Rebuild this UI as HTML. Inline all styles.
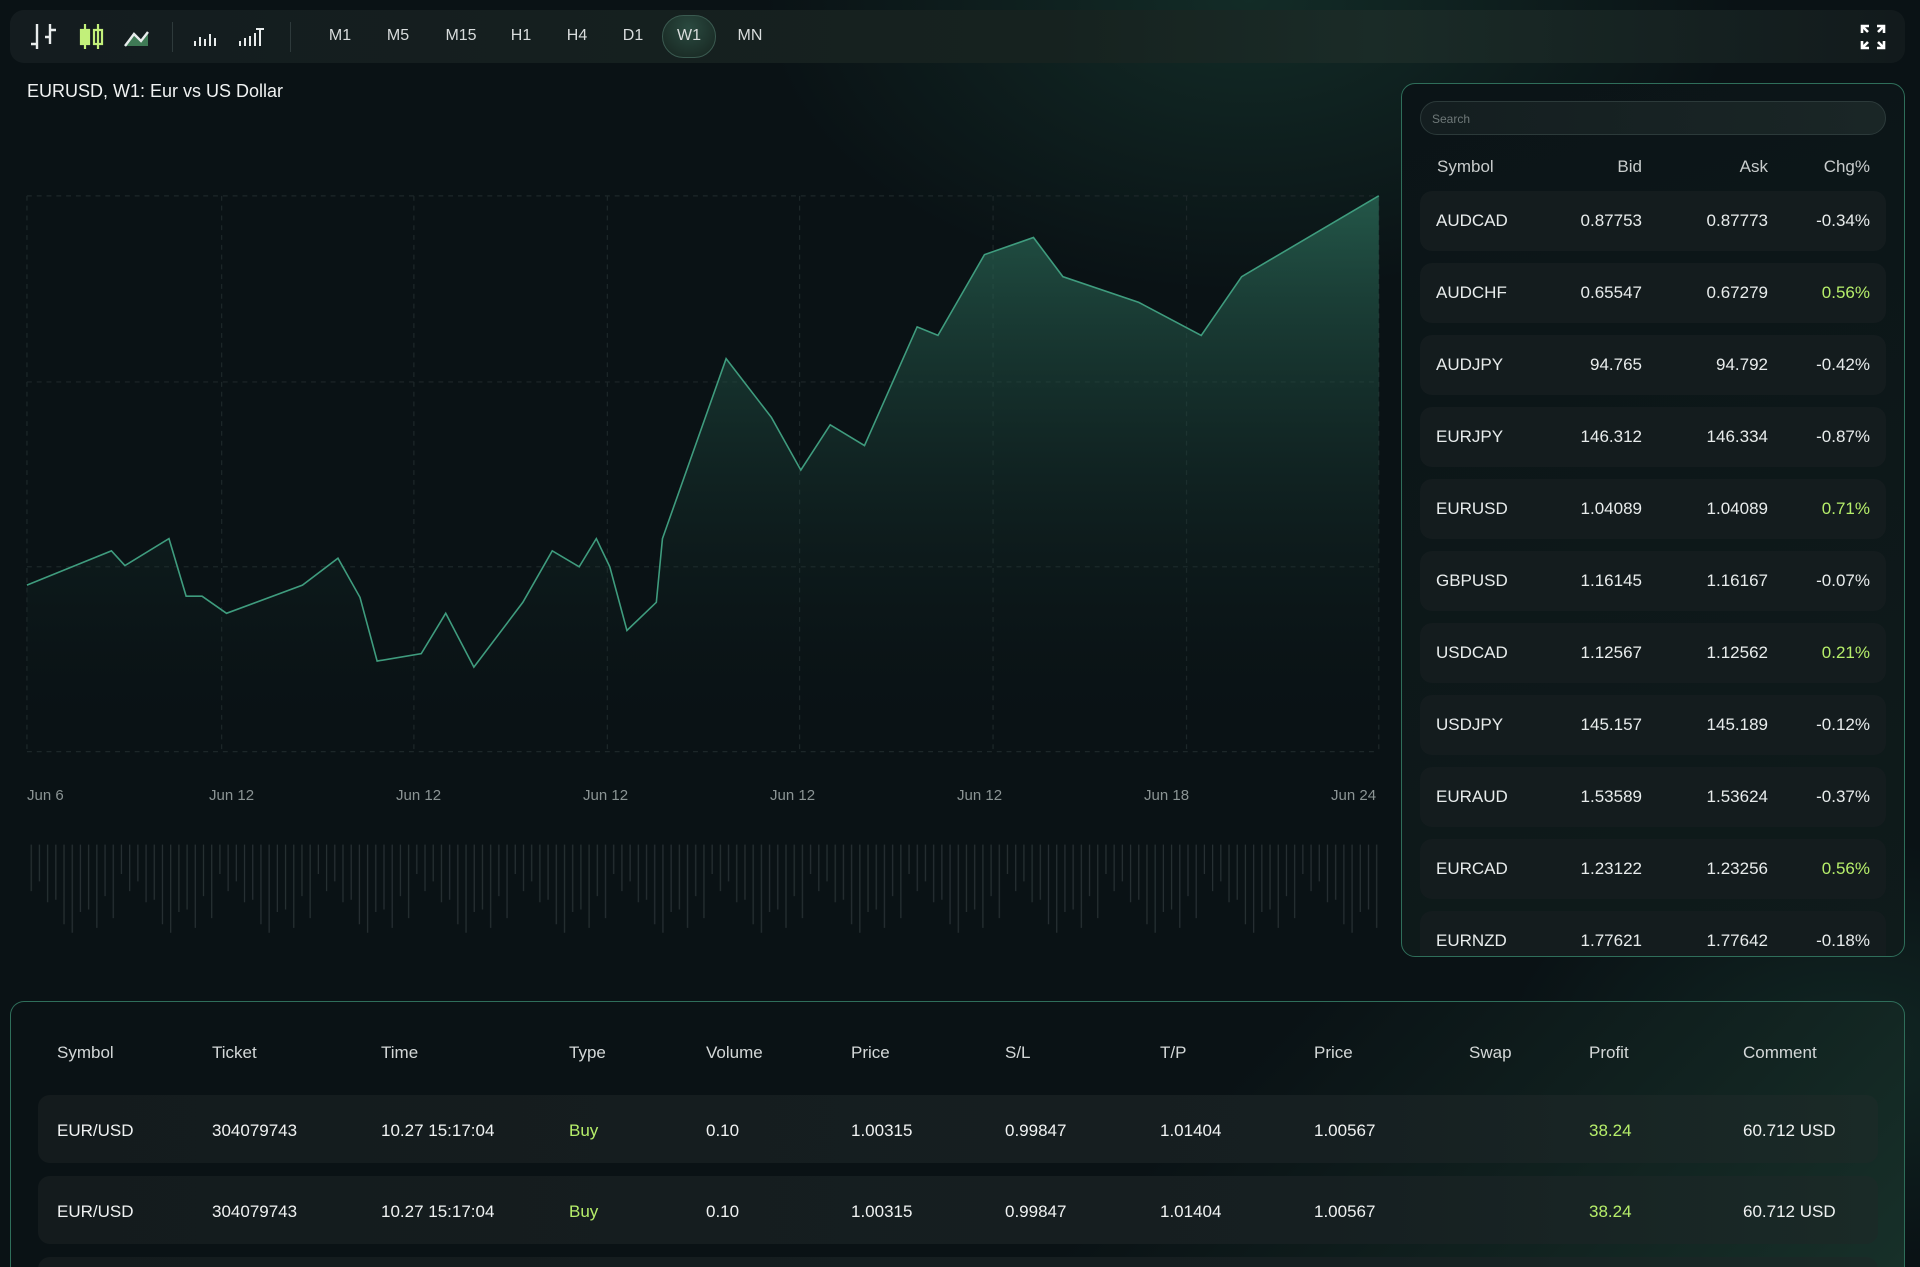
<!DOCTYPE html>
<html style="width:1920px;height:1267px;overflow:hidden"><head><meta charset="utf-8"><style>
*{margin:0;padding:0;box-sizing:border-box}
body{width:1920px;height:1267px;overflow:hidden;background:#0a1215;font-family:"Liberation Sans",sans-serif;color:#e8ecec;position:relative}
.glow{position:absolute;inset:0;background:radial-gradient(ellipse 700px 420px at 1250px 0px,rgba(40,110,85,.28),transparent 70%),radial-gradient(ellipse 500px 300px at 1850px 1050px,rgba(40,110,85,.22),transparent 70%)}
.tb{position:absolute;left:10px;top:10px;width:1895px;height:53px;border-radius:14px;background:linear-gradient(90deg,#141c1f 0%,#16221f 55%,#1a2b27 72%,#121a1c 100%)}
.tf{position:absolute;top:27px;font-size:16px;color:#d8dcdc;transform:translateX(-50%)}
.sep{position:absolute;top:22px;width:1px;height:30px;background:#2e3a3b}
.pill{position:absolute;left:662px;top:15px;width:54px;height:43px;border-radius:22px;border:1px solid #3a5a50;background:radial-gradient(circle at 50% 30%,#2a4a40,#16241f)}
.title{position:absolute;left:27px;top:81px;font-size:18px;color:#f0f2f2}
.xl{position:absolute;top:787px;font-size:15px;color:#8b9494}
.panel{position:absolute;left:1401px;top:83px;width:504px;height:874px;border:1px solid #2f6e5a;border-radius:14px;overflow:hidden;background:linear-gradient(160deg,#0b1417,#0f1b1b)}
.search{position:absolute;left:18px;top:17px;width:466px;height:34px;border:1px solid #2c3a3a;border-radius:17px;background:linear-gradient(90deg,#141e20,#1a2626);font-size:12px;color:#6e7878;padding:10px 11px}
.ph{position:absolute;top:73px;font-size:17px;color:#c8cccc}
.row{position:absolute;left:18px;width:466px;height:60px;border-radius:12px;background:#141c1e;font-size:17px}
.row span{position:absolute;top:20px}
.g{color:#b6ee6a}
.bp{position:absolute;left:10px;top:1001px;width:1895px;height:266px;border:1px solid #2f6e5a;border-bottom:none;border-radius:14px 14px 0 0;background:linear-gradient(135deg,#0a1215 60%,#173029 100%);overflow:hidden}
.bh{position:absolute;top:1043px;font-size:17px;color:#d4d8d8}
.br{position:absolute;left:27px;width:1840px;height:68px;border-radius:12px;background:linear-gradient(90deg,#141b1d,#161f21 70%,#1a2a27)}
.bc{position:absolute;font-size:17px;color:#f0f2f2}
.bc.g{color:#b6ee6a}
</style></head><body>
<div class="glow"></div>
<div class="tb"></div>
<svg style="position:absolute;left:0;top:0" width="280" height="70">
<g stroke="#e8ecec" stroke-width="2.4" fill="none">
<path d="M37 24v25M31 44h6M50 24v20M50 30h6M45 37h5"/>
</g>
<g stroke="#c2f07a" stroke-width="2.2" fill="none"><path d="M85 24v25M98 24v25"/><rect x="81" y="30" width="8" height="14" fill="#c2f07a"/><rect x="94" y="30" width="8" height="14"/></g>
<path d="M125 46l9-12 7 7 7-9v14H125z" fill="#3f7a55"/><path d="M125 46l9-12 7 7 7-9" stroke="#e8ecec" stroke-width="2.4" fill="none"/>
<g stroke="#e8ecec" stroke-width="2"><path d="M195 46v-5M200 46v-9M205 46v-7M210 46v-12M215 46v-8"/><path d="M240 46v-5M245 46v-8M250 46v-10M255 46v-13M260 46v-17M256 29h8"/></g>
</svg>
<div class="sep" style="left:172px"></div><div class="sep" style="left:290px"></div>
<div class="pill"></div>
<div class="tf" style="left:340px">M1</div><div class="tf" style="left:398px">M5</div><div class="tf" style="left:461px">M15</div><div class="tf" style="left:521px">H1</div><div class="tf" style="left:577px">H4</div><div class="tf" style="left:633px">D1</div><div class="tf" style="left:689px">W1</div><div class="tf" style="left:750px">MN</div>
<svg style="position:absolute;left:1860px;top:24px" width="26" height="26" stroke="#fff" stroke-width="2.6" fill="none"><path d="M2 9V2h7M2 2l6 6M24 9V2h-7M24 2l-6 6M2 17v7h7M2 24l6-6M24 17v7h-7M24 24l-6-6"/></svg>
<div class="title">EURUSD, W1: Eur vs US Dollar</div>
<svg style="position:absolute;left:0;top:0" width="1920" height="1267" viewBox="0 0 1568 1035" preserveAspectRatio="none">
<defs>
<linearGradient id="f" x1="0" y1="0" x2="0" y2="1"><stop offset="0" stop-color="#2b6b58" stop-opacity=".75"/><stop offset="1" stop-color="#0a1215" stop-opacity="0"/></linearGradient>
<pattern id="v" x="25" y="0" width="80.4" height="1035" patternUnits="userSpaceOnUse">
<g stroke="#273033" stroke-width="1">
<path d="M0.5 690v38M7.2 690v30M13.9 690v47M20.6 690v45M27.3 690v65M34 690v72M40.7 690v55M47.4 690v53M54.1 690v68M60.8 690v42M67.5 690v60M74.2 690v24"/>
</g></pattern>
</defs>
<g stroke="#1d2729" stroke-width="1" stroke-dasharray="4 4" fill="none">
<path d="M22 160H1126M22 312H1126M22 463H1126M22 614H1126"/>
<path d="M22 160V614M181 160V614M338 160V614M496 160V614M653 160V614M811 160V614M969 160V614M1126 160V614"/>
</g>
<path d="M22 478L91 450L102 462L138 440L152 487L165 487L185 501L247 478L276 456L294 488L308 540L344 534L364 501L387 545L427 492L451 450L473 463L487 440L498 463L512 515L536 492L541 440L593 293L630 341L654 384L678 347L706 364L749 267L766 274L804 208L844 194L868 226L930 247L981 274L1014 226L1126 160V614H22Z" fill="url(#f)"/>
<path d="M22 478L91 450L102 462L138 440L152 487L165 487L185 501L247 478L276 456L294 488L308 540L344 534L364 501L387 545L427 492L451 450L473 463L487 440L498 463L512 515L536 492L541 440L593 293L630 341L654 384L678 347L706 364L749 267L766 274L804 208L844 194L868 226L930 247L981 274L1014 226L1126 160" fill="none" stroke="#3f9c7e" stroke-width="1.3"/>
<rect x="22" y="688" width="1105" height="90" fill="url(#v)"/>
</svg>
<div class="xl" style="left:27px">Jun 6</div><div class="xl" style="left:209px">Jun 12</div><div class="xl" style="left:396px">Jun 12</div><div class="xl" style="left:583px">Jun 12</div><div class="xl" style="left:770px">Jun 12</div><div class="xl" style="left:957px">Jun 12</div><div class="xl" style="left:1144px">Jun 18</div><div class="xl" style="left:1331px">Jun 24</div>

<div class="panel">
<div class="search">Search</div>
<div class="ph" style="left:35px">Symbol</div><div class="ph" style="right:262px">Bid</div><div class="ph" style="right:136px">Ask</div><div class="ph" style="right:34px">Chg%</div>
<div class="row" style="top:107px"><span style="left:16px">AUDCAD</span><span style="right:244px">0.87753</span><span style="right:118px">0.87773</span><span style="right:16px">-0.34%</span></div>
<div class="row" style="top:179px"><span style="left:16px">AUDCHF</span><span style="right:244px">0.65547</span><span style="right:118px">0.67279</span><span style="right:16px" class="g">0.56%</span></div>
<div class="row" style="top:251px"><span style="left:16px">AUDJPY</span><span style="right:244px">94.765</span><span style="right:118px">94.792</span><span style="right:16px">-0.42%</span></div>
<div class="row" style="top:323px"><span style="left:16px">EURJPY</span><span style="right:244px">146.312</span><span style="right:118px">146.334</span><span style="right:16px">-0.87%</span></div>
<div class="row" style="top:395px"><span style="left:16px">EURUSD</span><span style="right:244px">1.04089</span><span style="right:118px">1.04089</span><span style="right:16px" class="g">0.71%</span></div>
<div class="row" style="top:467px"><span style="left:16px">GBPUSD</span><span style="right:244px">1.16145</span><span style="right:118px">1.16167</span><span style="right:16px">-0.07%</span></div>
<div class="row" style="top:539px"><span style="left:16px">USDCAD</span><span style="right:244px">1.12567</span><span style="right:118px">1.12562</span><span style="right:16px" class="g">0.21%</span></div>
<div class="row" style="top:611px"><span style="left:16px">USDJPY</span><span style="right:244px">145.157</span><span style="right:118px">145.189</span><span style="right:16px">-0.12%</span></div>
<div class="row" style="top:683px"><span style="left:16px">EURAUD</span><span style="right:244px">1.53589</span><span style="right:118px">1.53624</span><span style="right:16px">-0.37%</span></div>
<div class="row" style="top:755px"><span style="left:16px">EURCAD</span><span style="right:244px">1.23122</span><span style="right:118px">1.23256</span><span style="right:16px" class="g">0.56%</span></div>
<div class="row" style="top:827px"><span style="left:16px">EURNZD</span><span style="right:244px">1.77621</span><span style="right:118px">1.77642</span><span style="right:16px">-0.18%</span></div>
</div>

<div class="bp">
<div class="br" style="top:93px"></div>
<div class="br" style="top:174px"></div>
<div class="br" style="top:255px"></div>
</div>
<div class="bh" style="left:57px">Symbol</div><div class="bh" style="left:212px">Ticket</div><div class="bh" style="left:381px">Time</div><div class="bh" style="left:569px">Type</div><div class="bh" style="left:706px">Volume</div><div class="bh" style="left:851px">Price</div><div class="bh" style="left:1005px">S/L</div><div class="bh" style="left:1160px">T/P</div><div class="bh" style="left:1314px">Price</div><div class="bh" style="left:1469px">Swap</div><div class="bh" style="left:1589px">Profit</div><div class="bh" style="left:1743px">Comment</div>
<div class="bc" style="top:1121px;left:57px">EUR/USD</div><div class="bc" style="top:1121px;left:212px">304079743</div><div class="bc" style="top:1121px;left:381px">10.27 15:17:04</div><div class="bc g" style="top:1121px;left:569px">Buy</div><div class="bc" style="top:1121px;left:706px">0.10</div><div class="bc" style="top:1121px;left:851px">1.00315</div><div class="bc" style="top:1121px;left:1005px">0.99847</div><div class="bc" style="top:1121px;left:1160px">1.01404</div><div class="bc" style="top:1121px;left:1314px">1.00567</div><div class="bc g" style="top:1121px;left:1589px">38.24</div><div class="bc" style="top:1121px;left:1743px">60.712 USD</div>
<div class="bc" style="top:1202px;left:57px">EUR/USD</div><div class="bc" style="top:1202px;left:212px">304079743</div><div class="bc" style="top:1202px;left:381px">10.27 15:17:04</div><div class="bc g" style="top:1202px;left:569px">Buy</div><div class="bc" style="top:1202px;left:706px">0.10</div><div class="bc" style="top:1202px;left:851px">1.00315</div><div class="bc" style="top:1202px;left:1005px">0.99847</div><div class="bc" style="top:1202px;left:1160px">1.01404</div><div class="bc" style="top:1202px;left:1314px">1.00567</div><div class="bc g" style="top:1202px;left:1589px">38.24</div><div class="bc" style="top:1202px;left:1743px">60.712 USD</div>
</body></html>
